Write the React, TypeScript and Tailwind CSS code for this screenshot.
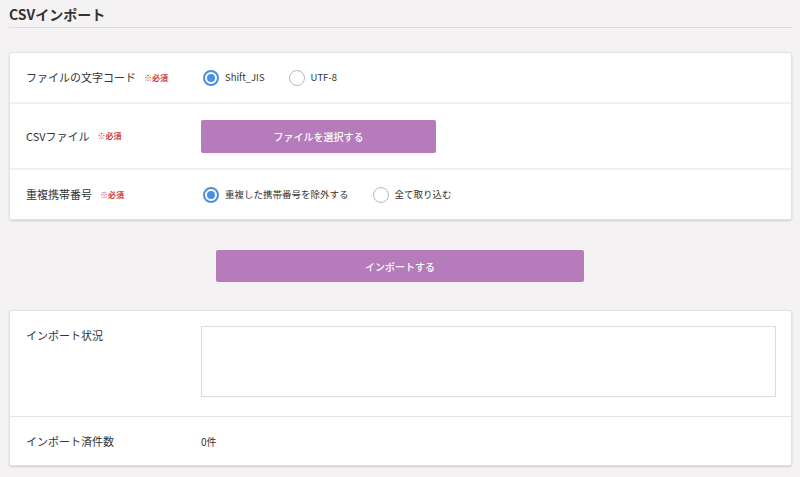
import React from "react";

function Required() {
  return <span className="ml-[8px] text-[8px] font-bold text-[#d03a3a]">※必須</span>;
}

function Radio({ label, checked }: { label: string; checked?: boolean }) {
  return (
    <label className="flex items-center gap-[6px]">
      <span
        className={
          checked
            ? "flex h-[16px] w-[16px] items-center justify-center rounded-full border-2 border-[#4a8fe0] bg-white"
            : "flex h-[16px] w-[16px] items-center justify-center rounded-full border border-[#b8b8b8] bg-white"
        }
      >
        {checked && <span className="h-[8px] w-[8px] rounded-full bg-[#4a8fe0]" />}
      </span>
      <span className="text-[9.5px] text-[#333]">{label}</span>
    </label>
  );
}

function Row({
  label,
  required,
  className,
  children,
}: {
  label: string;
  required?: boolean;
  className?: string;
  children: React.ReactNode;
}) {
  return (
    <div className={"flex " + (className ?? "")}>
      <div className="flex w-[191px] shrink-0 items-center pl-[16px] text-[11px] text-[#333]">
        <span>{label}</span>
        {required && <Required />}
      </div>
      <div className="flex flex-1 items-center pr-[16px]">{children}</div>
    </div>
  );
}

export default function App() {
  return (
    <div
      className="min-h-[477px] w-full bg-[#f4f2f3] pl-[9px] pr-[8px] pb-[12px]"
      style={{ fontFamily: '"Noto Sans CJK JP", "Noto Sans", sans-serif' }}
    >
      <h1 className="border-b border-[#dcdcdc] pt-[5px] pb-[4px] text-[14px] leading-[18px] font-bold text-[#333]">
        CSVインポート
      </h1>

      <section className="mt-[24px] rounded-[2px] border border-[#e3e3e3] bg-white shadow-[0_1px_2px_rgba(0,0,0,0.15)]">
        <Row label="ファイルの文字コード" required className="h-[51px] border-b-2 border-[#f0f0f0]">
          <div className="flex items-center gap-[24px] pl-[2px]">
            <Radio label="Shift_JIS" checked />
            <Radio label="UTF-8" />
          </div>
        </Row>
        <Row label="CSVファイル" required className="h-[66px] border-b-2 border-[#f0f0f0]">
          <button className="h-[33px] w-[235px] rounded-[2px] bg-[#b57bba] text-[10px] font-medium text-white">
            ファイルを選択する
          </button>
        </Row>
        <Row label="重複携帯番号" required className="h-[49px]">
          <div className="flex items-center gap-[24px] pl-[2px]">
            <Radio label="重複した携帯番号を除外する" checked />
            <Radio label="全て取り込む" />
          </div>
        </Row>
      </section>

      <div className="mt-[30px] flex justify-center pr-[1px]">
        <button className="h-[32px] w-[368px] rounded-[2px] bg-[#b57bba] text-[10px] font-medium text-white">
          インポートする
        </button>
      </div>

      <section className="mt-[28px] rounded-[2px] border border-[#e3e3e3] bg-white shadow-[0_1px_2px_rgba(0,0,0,0.15)]">
        <div className="flex h-[106px] border-b border-[#e3e3e3]">
          <div className="w-[191px] shrink-0 pl-[16px] pt-[16px] text-[11px] text-[#333]">インポート状況</div>
          <div className="flex-1 pt-[15px] pr-[15px]">
            <div className="h-[71px] w-full border border-[#dcdcdc] bg-white" />
          </div>
        </div>
        <div className="flex h-[48px] items-center">
          <div className="w-[191px] shrink-0 pl-[16px] text-[11px] text-[#333]">インポート済件数</div>
          <div className="text-[10px] text-[#333]">0件</div>
        </div>
      </section>
    </div>
  );
}
